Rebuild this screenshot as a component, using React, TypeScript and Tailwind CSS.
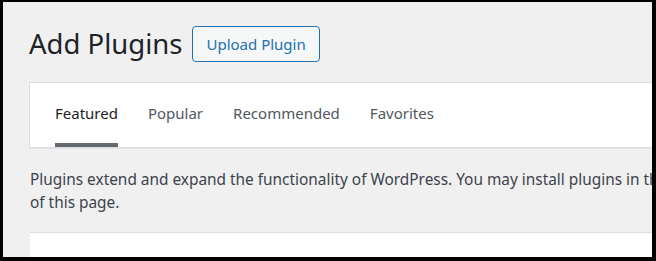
import React from "react";

export default function App() {
  const font = { fontFamily: '"Noto Sans", "Open Sans", sans-serif' };
  return (
    <div className="w-[656px] h-[261px] bg-black pt-[2px] pl-[3px] pr-[4px] pb-[4px]" style={font}>
      <div className="w-full h-full bg-[#f0f0f1] overflow-hidden">
        <div className="w-[1200px]">
          <div className="flex items-center pl-[26px] pt-[24px] h-[60px]">
            <h1 className="text-[27.5px] leading-[36px] text-[#1d2327] font-normal">Add Plugins</h1>
            <button className="ml-[10px] h-[36px] px-[13px] border border-[#2271b1] rounded-[4px] bg-[#f6f7f7] text-[#2271b1] text-[15px] leading-[34px]">
              Upload Plugin
            </button>
          </div>
          <div className="mt-[20px] ml-[26px] h-[66px] bg-white border border-[#dcdcde] shadow-[0_1px_1px_rgba(0,0,0,0.04)] flex items-stretch pl-[25px] gap-[30px]">
            <div className="relative flex items-center pb-[3px] text-[15px] text-[#1d2327]">
              Featured
              <span className="absolute left-0 right-0 bottom-0 h-[4px] bg-[#646970]" />
            </div>
            <div className="flex items-center pb-[3px] text-[15px] text-[#50575e]">Popular</div>
            <div className="flex items-center pb-[3px] text-[15px] text-[#50575e]">Recommended</div>
            <div className="flex items-center pb-[3px] text-[15px] text-[#50575e]">Favorites</div>
          </div>
          <p className="mt-[20px] pl-[27px] text-[15.4px] leading-[23px] text-[#3c434a] whitespace-nowrap">
            Plugins extend and expand the functionality of WordPress. You may install plugins in the WordPress Plugin Directory right from here, or upload a plugin in .zip format by clicking the button at the top
            <br />
            of this page.
          </p>
          <div className="mt-[18px] ml-[27px] h-[40px] bg-white border-t border-[#dcdcde]" />
        </div>
      </div>
    </div>
  );
}
